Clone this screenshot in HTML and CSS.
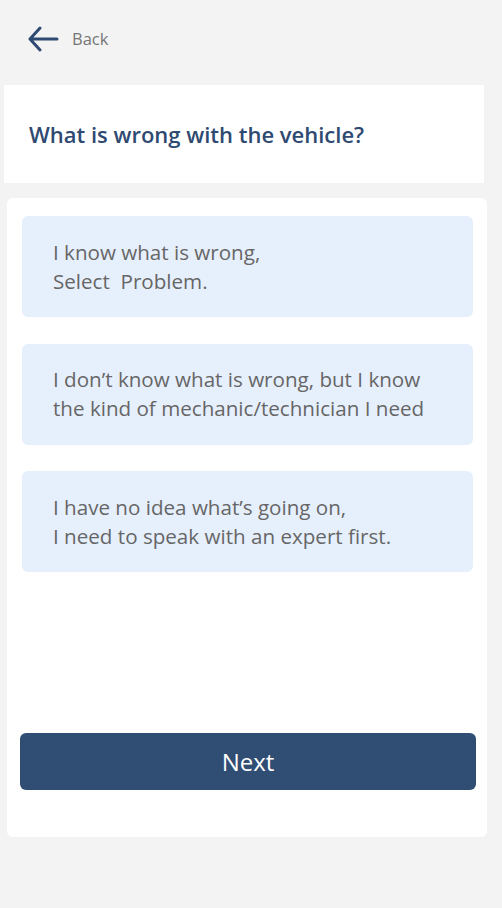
FILE: index.html
```html
<!DOCTYPE html>
<html>
<head>
<meta charset="utf-8">
<link rel="stylesheet" href="styles.css">
</head>
<body>
<div class="screen">
  <header class="topbar">
    <svg class="back-icon" width="32" height="26" viewBox="0 0 32 26">
      <path d="M13 2 L3 13 L13 24 M3 13 H30" fill="none" stroke="#2f4a72" stroke-width="3" stroke-linecap="round" stroke-linejoin="round"/>
    </svg>
    <span class="back-label">Back</span>
  </header>
  <section class="title-card">
    <h1 class="title">What is wrong with the vehicle?</h1>
  </section>
  <main class="main-card">
    <div class="options">
      <div class="option">I know what is wrong,<br>Select&nbsp; Problem.</div>
      <div class="option">I don’t know what is wrong, but I know<br>the kind of mechanic/technician I need</div>
      <div class="option">I have no idea what’s going on,<br>I need to speak with an expert first.</div>
    </div>
    <button class="next-btn">Next</button>
  </main>
</div>
</body>
</html>
```
FILE: styles.css
```css
html, body {
  margin: 0;
  padding: 0;
  background: #f3f3f3;
}
body {
  font-family: "Open Sans", "Noto Sans", sans-serif;
  width: 502px;
  height: 908px;
  overflow: hidden;
}
.screen {
  display: flex;
  flex-direction: column;
}
.topbar {
  display: flex;
  align-items: center;
  height: 85px;
  box-sizing: border-box;
  padding: 0 0 8px 27px;
}
.back-icon {
  display: block;
}
.back-label {
  margin-left: 13px;
  font-size: 16.5px;
  color: #767676;
}
.title-card {
  margin-left: 4px;
  width: 480px;
  height: 98px;
  background: #fff;
  display: flex;
  align-items: center;
  padding-left: 25px;
  box-sizing: border-box;
}
.title {
  margin: 0;
  font-size: 22px;
  font-weight: 600;
  color: #2f4a72;
}
.main-card {
  margin: 15px 0 0 7px;
  width: 480px;
  height: 639px;
  background: #fff;
  border-radius: 6px;
  box-sizing: border-box;
  padding: 18px 11px 0 13px;
  display: flex;
  flex-direction: column;
}
.options {
  display: flex;
  flex-direction: column;
  gap: 26.5px;
  padding: 0 3px 0 2px;
}
.option {
  height: 101px;
  box-sizing: border-box;
  background: #e6f0fd;
  border-radius: 6px;
  padding-left: 31px;
  display: flex;
  flex-direction: column;
  justify-content: center;
  font-size: 20.6px;
  line-height: 29px;
  color: #666;
}
.next-btn {
  margin-top: 161px;
  height: 57px;
  border: none;
  border-radius: 6px;
  background: #304d73;
  color: #fff;
  font-family: inherit;
  font-size: 24px;
  width: 100%;
}
```
